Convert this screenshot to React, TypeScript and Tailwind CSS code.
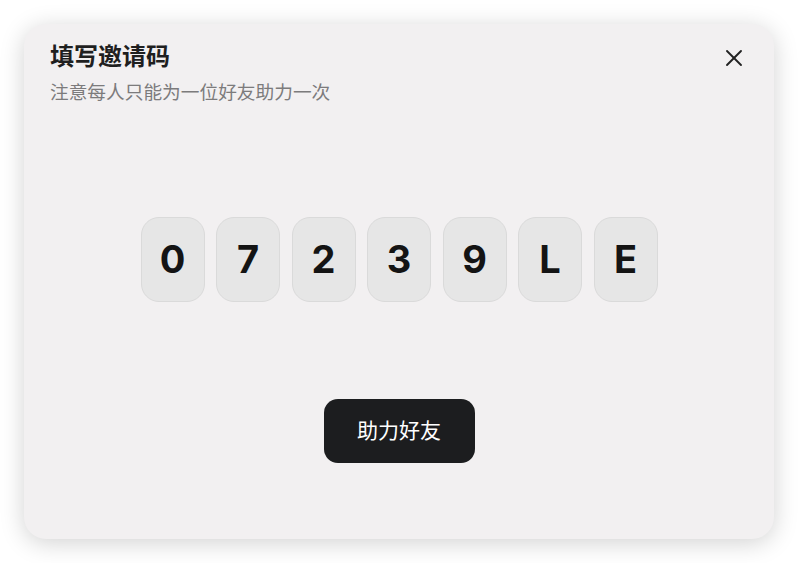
import { X } from "lucide-react";

export default function App() {
  const code = ["0", "7", "2", "3", "9", "L", "E"];
  return (
    <div className="flex h-[563px] w-[798px] items-start bg-white p-6 font-['Inter','Noto_Sans_CJK_SC',sans-serif]">
      <div className="relative flex h-[515px] w-[750px] flex-col rounded-[22px] bg-[#f2f0f1] shadow-[0_4px_24px_rgba(0,0,0,0.18)]">
        {/* header */}
        <div className="flex items-start justify-between pl-[26px] pr-[26px] pt-[17px]">
          <div>
            <h2 className="text-[24px] font-bold leading-[32px] text-[#1f1f1f]">填写邀请码</h2>
            <p className="mt-[8px] text-[18.7px] leading-[24px] text-[#7c7b7c]">注意每人只能为一位好友助力一次</p>
          </div>
          <button className="mt-[3px] text-[#222]">
            <X size={28} strokeWidth={1.6} />
          </button>
        </div>

        {/* code boxes */}
        <div className="mt-[112px] flex justify-center gap-[11.5px]">
          {code.map((c, i) => (
            <div
              key={i}
              className="flex h-[85px] w-[64px] items-center justify-center rounded-[18px] border border-[#dadada] bg-[#e6e6e6] text-[38px] font-bold text-[#141414]"
            >
              {c}
            </div>
          ))}
        </div>

        {/* action */}
        <div className="mt-[97px] flex justify-center">
          <button className="h-[64px] w-[151px] rounded-[14px] bg-[#1c1d1f] text-[21px] text-white">
            助力好友
          </button>
        </div>
      </div>
    </div>
  );
}
